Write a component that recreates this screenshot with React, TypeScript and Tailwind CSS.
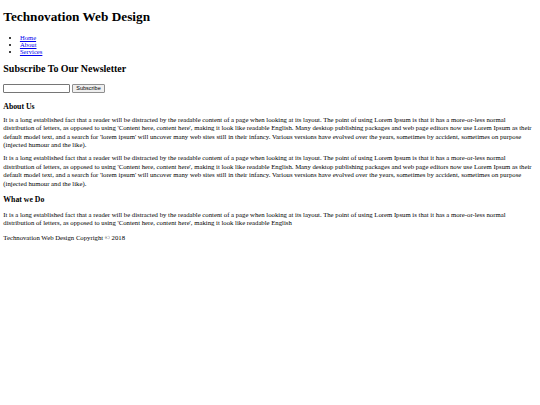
import React from 'react';

const lorem =
  "It is a long established fact that a reader will be distracted by the readable content of a page when looking at its layout. The point of using Lorem Ipsum is that it has a more-or-less normal distribution of letters, as opposed to using 'Content here, content here', making it look like readable English. Many desktop publishing packages and web page editors now use Lorem Ipsum as their default model text, and a search for 'lorem ipsum' will uncover many web sites still in their infancy. Various versions have evolved over the years, sometimes by accident, sometimes on purpose (injected humour and the like).";

const shortLorem =
  "It is a long established fact that a reader will be distracted by the readable content of a page when looking at its layout. The point of using Lorem Ipsum is that it has a more-or-less normal distribution of letters, as opposed to using 'Content here, content here', making it look like readable English";

const App: React.FC = () => {
  return (
    <div className="ml-[3.32px] mr-[2px] my-[3.32px] font-['Liberation_Serif','Times_New_Roman',serif] text-[6.64px] leading-[normal] text-black">
      <header>
        <h1 className="text-[13.28px] font-bold my-[8.9px]">Technovation Web Design</h1>
        <nav>
          <ul className="list-disc pl-[16.6px] my-[6.64px]">
            {['Home', 'About', 'Services'].map((item) => (
              <li key={item}>
                <a href="#" className="text-[#0000ee] underline">
                  {item}
                </a>
              </li>
            ))}
          </ul>
        </nav>
      </header>

      <section>
        <h2 className="text-[9.96px] font-bold my-[8.27px]">Subscribe To Our Newsletter</h2>
        <form onSubmit={(e) => e.preventDefault()} className="pt-[2px] leading-[9px]">
          <input
            type="email"
            className="w-[67px] h-[9px] align-top border border-[#767676] rounded-[1px] bg-white px-[1px] text-[5.5px] font-['Liberation_Sans',Arial,sans-serif]"
          />{' '}
          <button
            type="submit"
            className="w-[33px] h-[9px] align-top border border-[#8f8f8f] rounded-[1px] bg-[#efefef] text-[5.5px] leading-none text-black font-['Liberation_Sans',Arial,sans-serif]"
          >
            Subscribe
          </button>
        </form>
      </section>

      <section className="text-[6.72px] leading-[8.5px]">
        <h3 className="text-[7.77px] leading-[normal] font-bold mt-[9px] mb-[3.5px]">About Us</h3>
        <p className="my-[4.5px]">{lorem}</p>
        <p className="my-[4.5px]">{lorem}</p>
      </section>

      <section className="text-[6.72px] leading-[8.5px]">
        <h3 className="text-[7.77px] leading-[normal] font-bold mt-[6.5px] mb-[7px]">What we Do</h3>
        <p className="my-[4.5px]">{shortLorem}</p>
      </section>

      <footer className="text-[6.72px] leading-[8.5px]">
        <p className="mt-[6px]">Technovation Web Design Copyright © 2018</p>
      </footer>
    </div>
  );
};

export default App;
